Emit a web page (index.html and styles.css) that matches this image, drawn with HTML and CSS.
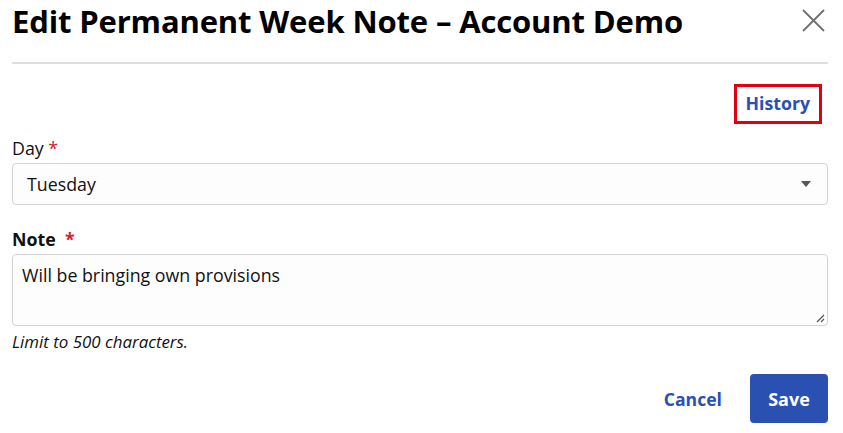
FILE: index.html
```html
<!DOCTYPE html>
<html lang="en">
<head>
<meta charset="utf-8">
<title>Edit Permanent Week Note</title>
<link rel="stylesheet" href="styles.css">
</head>
<body>
<div class="modal">
  <header class="modal-header">
    <h1 class="modal-title">Edit Permanent Week Note – Account Demo</h1>
    <button class="close-btn" aria-label="Close">
      <svg width="23" height="23" viewBox="0 0 23 23"><path d="M1 1 L22 22 M22 1 L1 22" stroke="#6f6f6f" stroke-width="1.8" fill="none"/></svg>
    </button>
  </header>
  <div class="history-row">
    <a class="history-link" href="#">History</a>
  </div>
  <div class="field">
    <label class="label">Day <span class="req">*</span></label>
    <div class="select">
      <span class="select-value">Tuesday</span>
      <span class="caret"></span>
    </div>
  </div>
  <div class="field field-note">
    <label class="label label-bold">Note&nbsp; <span class="req">*</span></label>
    <div class="textarea">
      <span class="textarea-value">Will be bringing own provisions</span>
      <svg class="resize" width="9" height="9" viewBox="0 0 9 9"><path d="M8 1 L1 8 M8 5 L5 8" stroke="#555" stroke-width="1.2" fill="none"/></svg>
    </div>
    <div class="hint">Limit to 500 characters.</div>
  </div>
  <footer class="modal-footer">
    <a class="cancel" href="#">Cancel</a>
    <button class="save">Save</button>
  </footer>
</div>
</body>
</html>
```
FILE: styles.css
```css
* { box-sizing: border-box; }
html, body { margin: 0; padding: 0; background: #fff; }
body {
  font-family: "Open Sans", "Noto Sans", sans-serif;
  color: #111;
  width: 843px;
  height: 433px;
  overflow: hidden;
}
.modal {
  padding: 0 15px 0 12px;
  display: flex;
  flex-direction: column;
}
.modal-header {
  display: flex;
  justify-content: space-between;
  align-items: flex-start;
  height: 64px;
  border-bottom: 2px solid #dedede;
}
.modal-title {
  margin: 0;
  font-size: 31px;
  line-height: 43px;
  font-weight: 700;
  color: #000;
  letter-spacing: -0.15px;
}
.close-btn {
  border: 0;
  background: none;
  padding: 0;
  margin: 9px 3px 0 0;
  width: 23px;
  height: 23px;
  cursor: pointer;
}
.close-btn svg { display: block; }
.history-row {
  display: flex;
  justify-content: flex-end;
  padding-top: 20px;
  padding-right: 6px;
}
.history-link {
  display: block;
  border: 3px solid #e1000f;
  padding: 5px 9px 7px 9px;
  font-size: 17.7px;
  line-height: 22px;
  font-weight: 700;
  color: #2b4fb3;
  text-decoration: none;
}
.field { margin-top: 12px; }
.label {
  display: block;
  font-size: 17.8px;
  line-height: 24px;
  color: #111;
  margin-bottom: 3px;
}
.label-bold { font-weight: 700; }
.req { color: #d4202a; }
.select {
  height: 42px;
  border: 1px solid #d2d2d2;
  border-radius: 4px;
  background: #fdfdfd;
  display: flex;
  align-items: center;
  justify-content: space-between;
  padding: 0 16px 0 14px;
}
.select-value { font-size: 17.8px; color: #111; }
.caret {
  width: 0; height: 0;
  border-left: 5px solid transparent;
  border-right: 5px solid transparent;
  border-top: 6px solid #555;
}
.field.field-note { margin-top: 22px; }
.textarea {
  position: relative;
  height: 72px;
  border: 1px solid #d2d2d2;
  border-radius: 4px;
  background: #fdfdfd;
  padding: 8px 9px;
}
.textarea-value { font-size: 17.8px; line-height: 24px; color: #111; }
.resize { position: absolute; right: 2px; bottom: 2px; }
.hint {
  margin-top: 4px;
  font-size: 16.9px;
  line-height: 24px;
  font-style: italic;
  color: #111;
}
.modal-footer {
  display: flex;
  justify-content: flex-end;
  align-items: center;
  gap: 28px;
  margin-top: 20px;
}
.cancel {
  font-size: 17.6px;
  font-weight: 700;
  color: #2b4fb3;
  text-decoration: none;
}
.save {
  width: 78px;
  height: 49px;
  border: 0;
  border-radius: 4px;
  background: #2a50b1;
  color: #fff;
  font-family: inherit;
  font-size: 18px;
  font-weight: 700;
}
```
